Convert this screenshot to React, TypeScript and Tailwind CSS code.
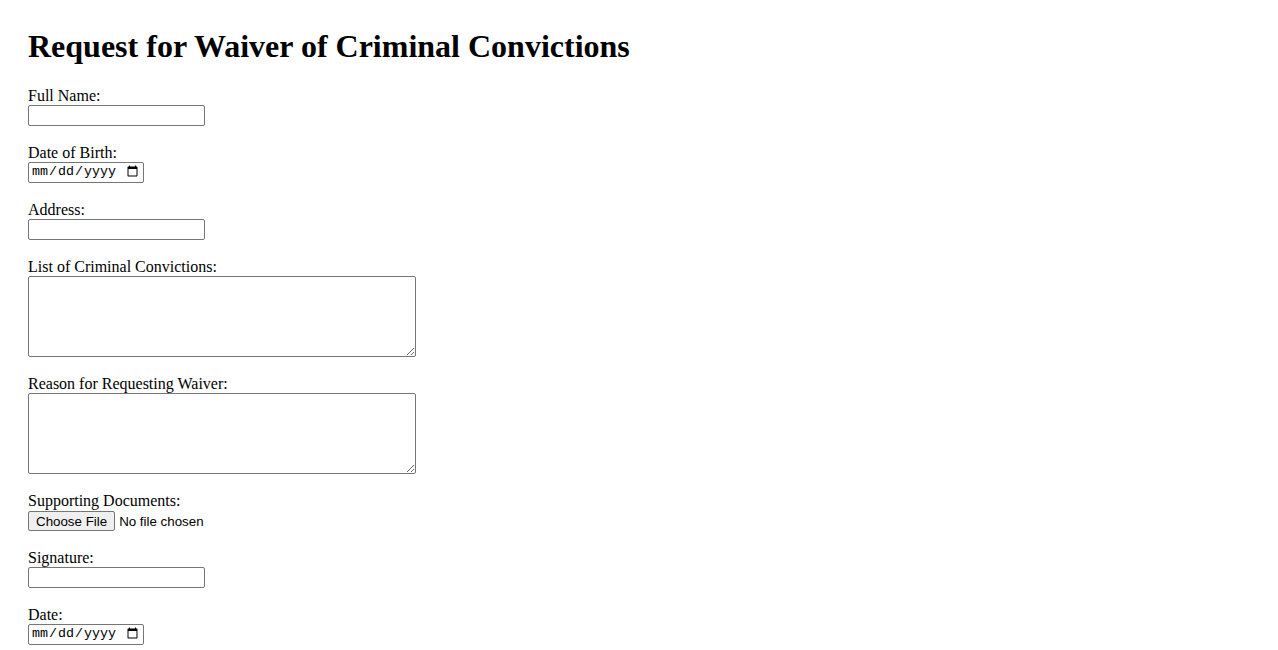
import React from "react";

const labelCls = "block h-[18px] leading-[18px] text-[16px]";
const textInput =
  "block w-[177px] h-[21px] border border-[#767676] rounded-[2px] px-[2px] bg-white text-[13.33px] font-['Liberation_Sans',Arial,sans-serif]";
const dateInput =
  "block w-[116px] h-[21px] border border-[#767676] rounded-[2px] pl-[2px] pr-[2px] bg-white text-[13.33px] text-black font-['Liberation_Mono','DejaVu_Sans_Mono',monospace]";
const areaInput =
  "block w-[388px] h-[81px] border border-[#767676] rounded-[2px] p-[2px] bg-white text-[13.33px] font-['Liberation_Mono',monospace]";

function Field({ label, children }: { label: string; children: React.ReactNode }) {
  return (
    <div className="mb-[18px]">
      <label className={labelCls}>{label}</label>
      {children}
    </div>
  );
}

export default function App() {
  return (
    <div className="min-h-screen bg-white text-black font-['Liberation_Serif','Times_New_Roman',serif] px-7 pt-7">
      <h1 className="text-[32px] font-bold leading-[36px] mb-[22.5px]">
        Request for Waiver of Criminal Convictions
      </h1>
      <form>
        <Field label="Full Name:">
          <input type="text" className={textInput} />
        </Field>
        <Field label="Date of Birth:">
          <input type="date" className={dateInput} />
        </Field>
        <Field label="Address:">
          <input type="text" className={textInput} />
        </Field>
        <Field label="List of Criminal Convictions:">
          <textarea className={areaInput} />
        </Field>
        <Field label="Reason for Requesting Waiver:">
          <textarea className={areaInput} />
        </Field>
        <Field label="Supporting Documents:">
          <input
            type="file"
            className="block h-[21px] pt-px text-[13.33px] font-['Liberation_Sans',Arial,sans-serif] file:h-[20px] file:border file:border-[#767676] file:rounded-[2px] file:bg-[#efefef] file:px-[7px] file:mr-[4px] file:text-black"
          />
        </Field>
        <Field label="Signature:">
          <input type="text" className={textInput} />
        </Field>
        <Field label="Date:">
          <input type="date" className={dateInput} />
        </Field>
      </form>
    </div>
  );
}
